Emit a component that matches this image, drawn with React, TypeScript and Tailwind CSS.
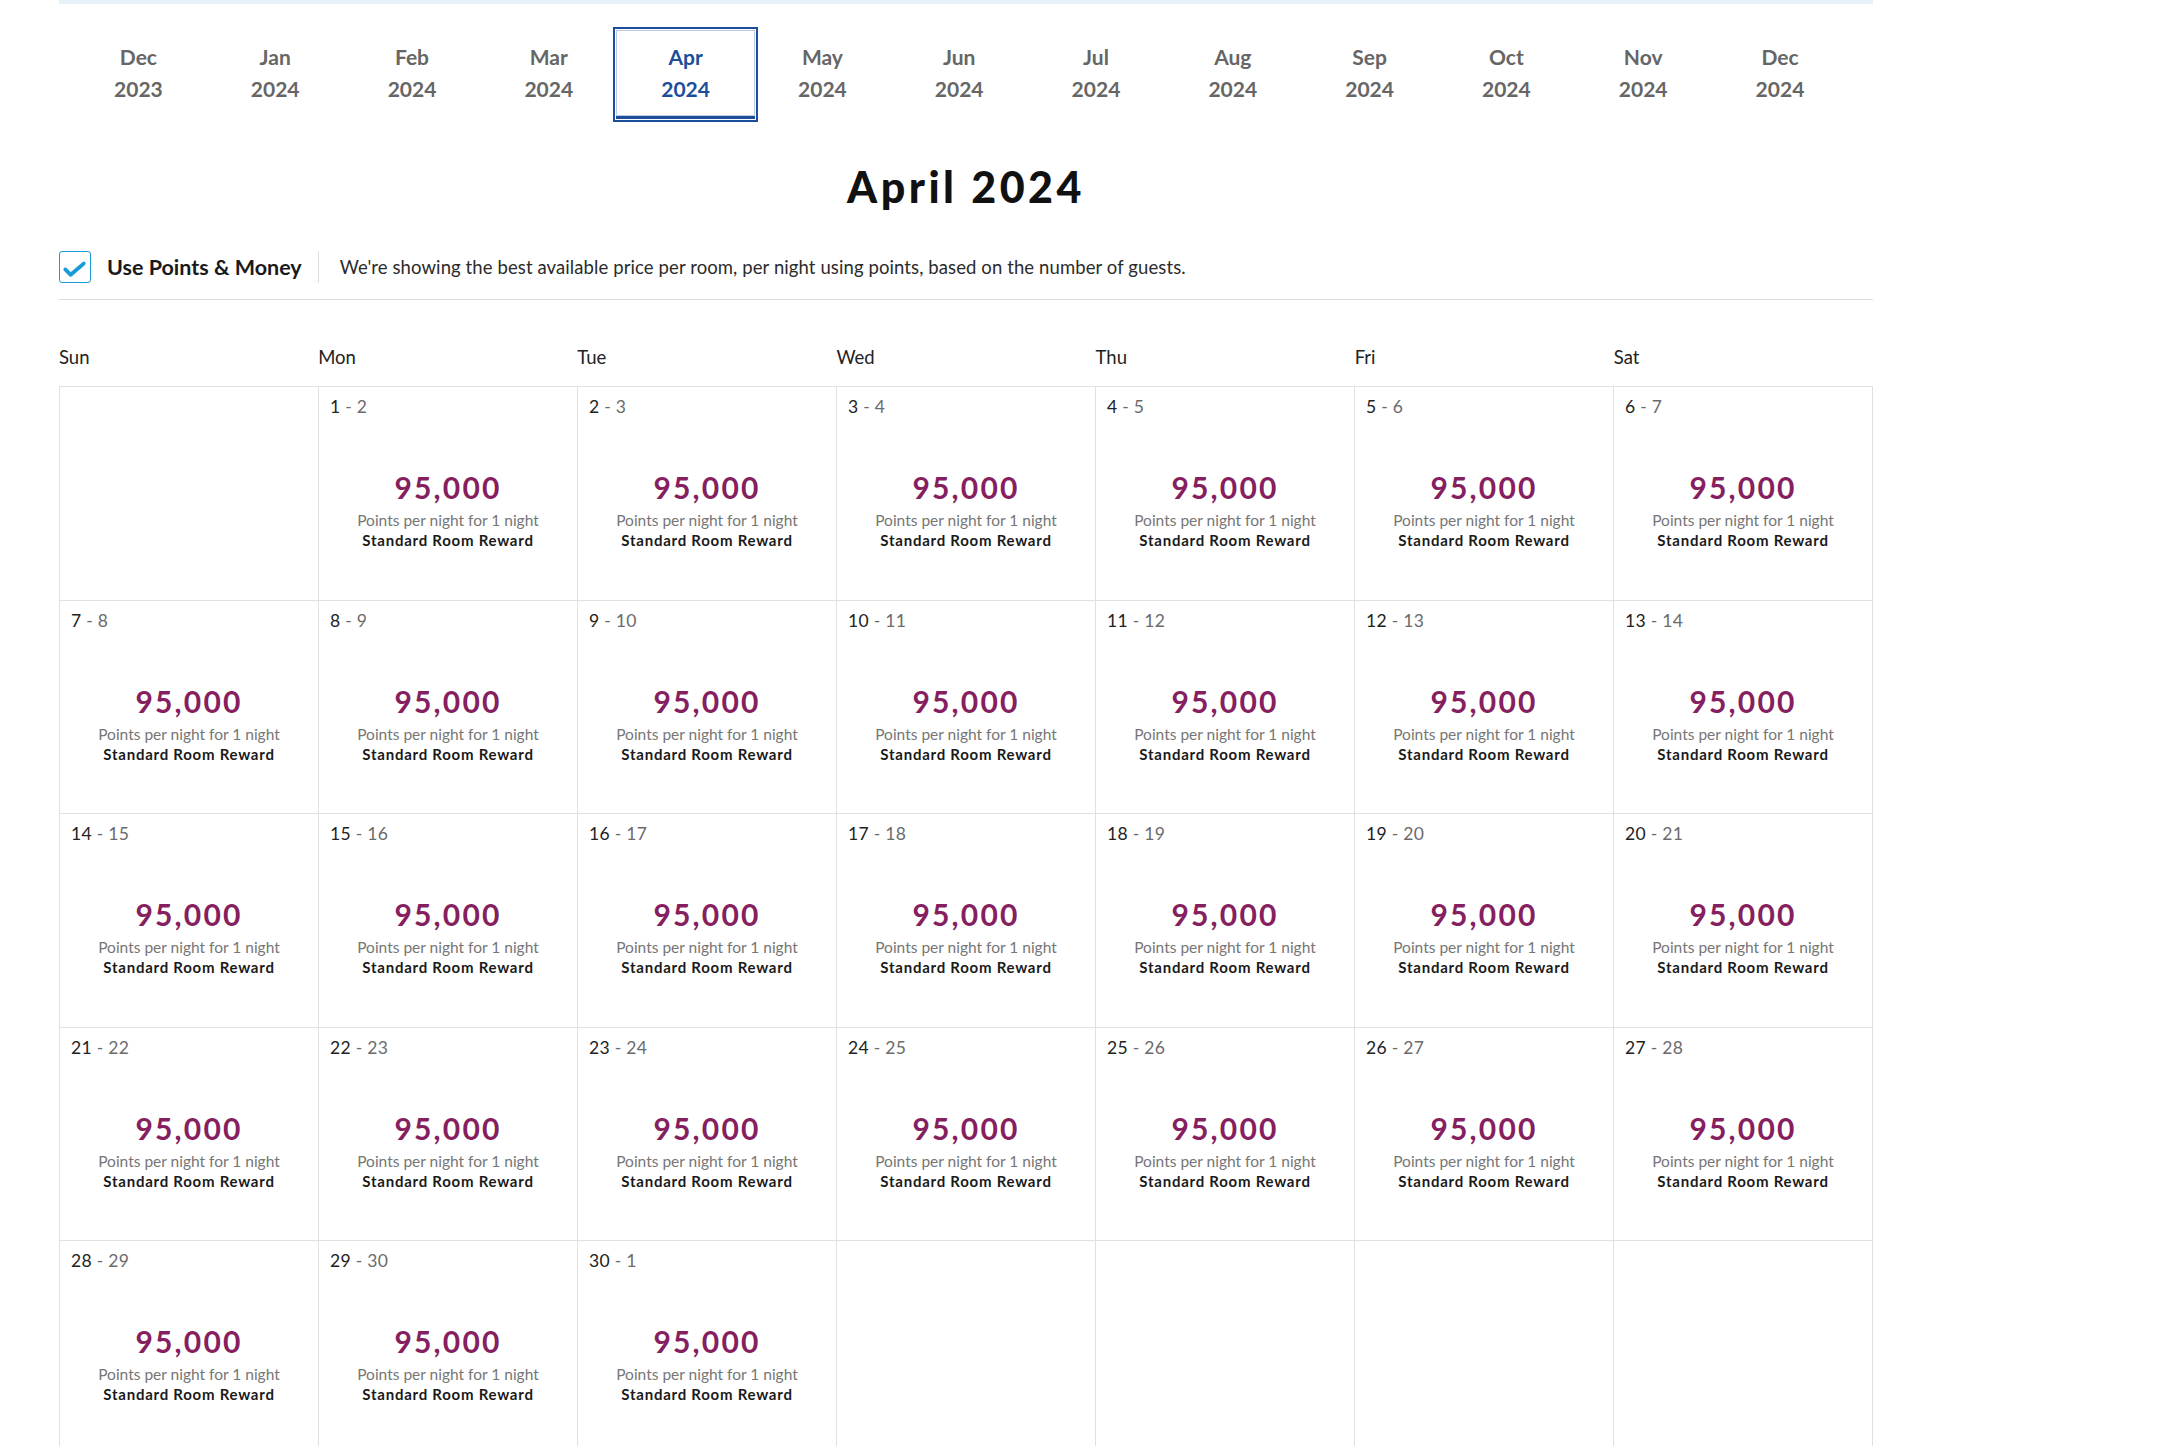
import React from "react";

const months = [
  ["Dec", "2023"],
  ["Jan", "2024"],
  ["Feb", "2024"],
  ["Mar", "2024"],
  ["Apr", "2024"],
  ["May", "2024"],
  ["Jun", "2024"],
  ["Jul", "2024"],
  ["Aug", "2024"],
  ["Sep", "2024"],
  ["Oct", "2024"],
  ["Nov", "2024"],
  ["Dec", "2024"],
];

const days = ["Sun", "Mon", "Tue", "Wed", "Thu", "Fri", "Sat"];

type Cell = { a: number; b: number } | null;

function buildCells(): Cell[] {
  const cells: Cell[] = [null];
  for (let d = 1; d <= 30; d++) {
    cells.push({ a: d, b: d === 30 ? 1 : d + 1 });
  }
  while (cells.length % 7 !== 0) cells.push(null);
  return cells;
}

function CheckBox() {
  return (
    <div className="flex h-[32px] w-[32px] shrink-0 items-center justify-center rounded-[3px] border-[1.5px] border-[#1b9ad9] bg-white">
      <svg width="31" height="31" viewBox="0 0 31 31" fill="none">
        <polyline
          points="5.5,17.5 11,23 24.5,11.5"
          stroke="#1b9ad9"
          strokeWidth="4"
          strokeLinecap="round"
          strokeLinejoin="round"
        />
      </svg>
    </div>
  );
}

function DayCell({ cell }: { cell: Cell }) {
  return (
    <div className="h-[213.5px] border-r border-b border-[#e1e1e1] px-[11px] pt-[10px]">
      {cell && (
        <>
          <div className="text-[17.5px] leading-[20px] tracking-[0.3px] text-[#222]">
            {cell.a}
            <span className="text-[#6b6b6b]"> - {cell.b}</span>
          </div>
          <div className="mt-[53px] flex flex-col items-center">
            <div className="text-[30px] font-bold leading-[34px] tracking-[2.2px] text-[#861f5f]">
              95,000
            </div>
            <div className="mt-[6px] text-[15.5px] leading-[20px] text-[#767676]">
              Points per night for 1 night
            </div>
            <div className="text-[15px] font-bold leading-[20px] tracking-[0.75px] text-[#1a1a1a]">
              Standard Room Reward
            </div>
          </div>
        </>
      )}
    </div>
  );
}

export default function App() {
  const cells = buildCells();
  return (
    <div className="min-h-screen w-full bg-white font-[Lato,sans-serif]">
      <div className="ml-[59px] w-[1814px]">
        <div className="h-[4px] w-full bg-[#e6f1f8]" />

        {/* Month tabs */}
        <div className="mt-[23px] flex pl-[11px]">
          {months.map(([m, y], i) => {
            const active = i === 4;
            return active ? (
              <div
                key={i}
                className="-mx-[4px] flex h-[95px] w-[144.8px] shrink-0 flex-col border-2 border-[#1c4e9b] p-[1px]"
              >
                <div className="flex flex-1 flex-col items-center border-b-[3px] border-[#1c4e9b] pt-[11px] shadow-[inset_0_0_0_1px_#bccbe3] text-[21px] font-bold leading-[32px] text-[#1c4e9b]">
                  <span>{m}</span>
                  <span>{y}</span>
                </div>
              </div>
            ) : (
              <div
                key={i}
                className="flex h-[95px] w-[136.8px] shrink-0 flex-col items-center pt-[14px] text-[21px] font-bold leading-[32px] text-[#666]"
              >
                <span>{m}</span>
                <span>{y}</span>
              </div>
            );
          })}
        </div>

        {/* Title */}
        <h1 className="mt-[40px] text-center text-[43px] font-black leading-[50px] tracking-[3.5px] text-[#111]">
          April 2024
        </h1>

        {/* Points & Money row */}
        <div className="mt-[39px] flex items-center border-b border-[#dedede] pb-[16px]">
          <CheckBox />
          <span className="ml-[16px] text-[21.5px] font-bold leading-[32px] text-[#1a1a1a]">
            Use Points &amp; Money
          </span>
          <div className="ml-[16px] h-[32px] w-px bg-[#dedede]" />
          <span className="ml-[21px] text-[18.5px] leading-[24px] tracking-[0.1px] text-[#2b2b2b]">
            We're showing the best available price per room, per night using points, based on the
            number of guests.
          </span>
        </div>

        {/* Day headers */}
        <div className="mt-[46px] grid grid-cols-7">
          {days.map((d) => (
            <div key={d} className="text-[18.5px] leading-[22px] text-[#222]">
              {d}
            </div>
          ))}
        </div>

        {/* Calendar grid */}
        <div className="mt-[18px] grid grid-cols-7 border-t border-l border-[#e1e1e1]">
          {cells.map((c, i) => (
            <DayCell key={i} cell={c} />
          ))}
        </div>
      </div>
    </div>
  );
}
